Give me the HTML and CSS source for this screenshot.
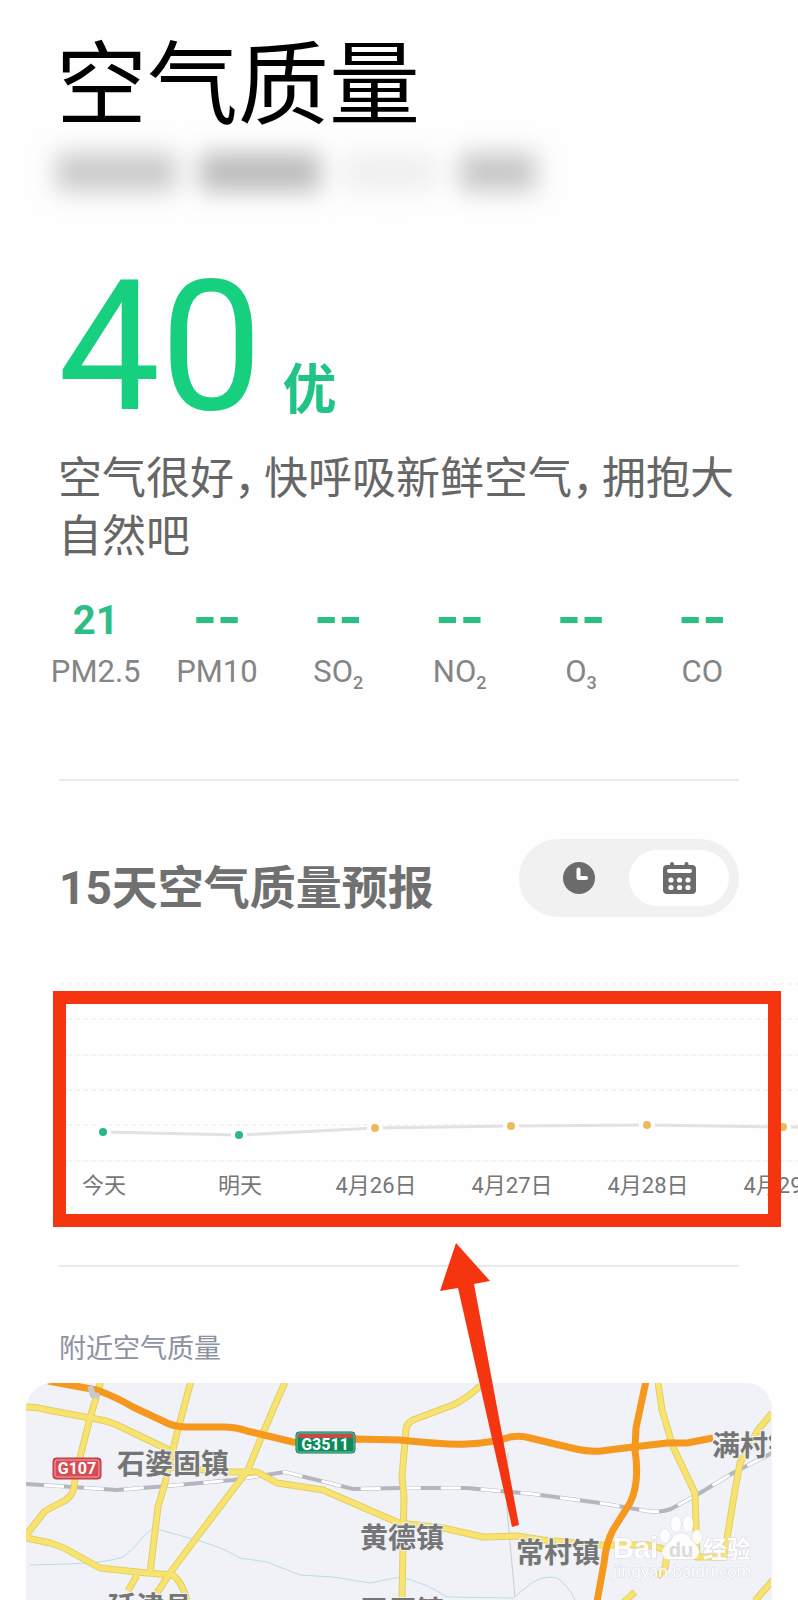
FILE: index.html
```html
<!DOCTYPE html>
<html lang="zh-CN">
<head>
    <meta charset="UTF-8">
    <meta name="viewport" content="width=device-width, initial-scale=1.0">
    <title>空气质量</title>
    <link rel="stylesheet" href="styles.css">
</head>
<body>
    <main class="page">
        <header class="header">
            <h1>空气质量</h1>
            <div class="location" aria-hidden="true">
                <span class="smudge wide"></span>
                <span class="smudge wide dark"></span>
                <span class="smudge faint"></span>
                <span class="smudge short"></span>
            </div>
        </header>

        <section class="summary">
            <div class="aqi">
                <span class="aqi-value">40</span>
                <span class="aqi-level">优</span>
            </div>
            <p class="advice">空气很好<span class="comma">，</span>快呼吸新鲜空气<span class="comma">，</span>拥抱大自然吧</p>
        </section>

        <dl class="pollutants">
            <div class="pollutant"><dd>21</dd><dt>PM2.5</dt></div>
            <div class="pollutant"><dd class="empty">--</dd><dt>PM10</dt></div>
            <div class="pollutant"><dd class="empty">--</dd><dt>SO<sub>2</sub></dt></div>
            <div class="pollutant"><dd class="empty">--</dd><dt>NO<sub>2</sub></dt></div>
            <div class="pollutant"><dd class="empty">--</dd><dt>O<sub>3</sub></dt></div>
            <div class="pollutant"><dd class="empty">--</dd><dt>CO</dt></div>
        </dl>

        <section class="forecast">
            <div class="forecast-head">
                <h2>15天空气质量预报</h2>
                <div class="toggle">
                    <button type="button" class="toggle-btn" aria-label="按小时">
                        <svg width="34" height="34" viewBox="0 0 34 34">
                            <circle cx="17" cy="17" r="16" fill="#6b6b6b"/>
                            <path d="M16.500 8.500V17H24" fill="none" stroke="#fff" stroke-width="4" stroke-linecap="round" stroke-linejoin="round"/>
                        </svg>
                    </button>
                    <button type="button" class="toggle-btn active" aria-label="按天">
                        <svg width="34" height="34" viewBox="0 0 34 34">
                            <rect x="1" y="4" width="33" height="29" rx="4" fill="#6b6b6b"/>
                            <path d="M10 3V7M24.500 3V7" stroke="#6b6b6b" stroke-width="4" stroke-linecap="round"/>
                            <path d="M7 10H28" stroke="#fff" stroke-width="4" stroke-linecap="round"/>
                            <g fill="#fff">
                                <circle cx="9" cy="19" r="2.600"/><circle cx="17.500" cy="19" r="2.600"/><circle cx="26" cy="19" r="2.600"/>
                                <circle cx="9" cy="26.500" r="2.600"/><circle cx="17.500" cy="26.500" r="2.600"/><circle cx="26" cy="26.500" r="2.600"/>
                            </g>
                        </svg>
                    </button>
                </div>
            </div>

            <div class="chart">
                <svg class="chart-plot" height="180" role="img" aria-label="15天空气质量折线图">
                    <g stroke="#f1f1ee" stroke-width="1.500" stroke-dasharray="5 3">
                        <path d="M0 1H1200M0 36H1200M0 72H1200M0 107H1200M0 142H1200M0 178H1200"/>
                    </g>
                    <path d="M44 149L180 152L316 145L452 143L588 142L724 144L860 144" fill="none" stroke="#e2e2e2" stroke-width="3"/>
                    <g stroke="#fff" stroke-width="8" paint-order="stroke">
                        <circle cx="44" cy="149" r="4" fill="#2db784"/>
                        <circle cx="180" cy="152" r="4" fill="#2db784"/>
                        <circle cx="316" cy="145" r="4" fill="#eeb95c"/>
                        <circle cx="452" cy="143" r="4" fill="#eeb95c"/>
                        <circle cx="588" cy="142" r="4" fill="#eeb95c"/>
                        <circle cx="724" cy="144" r="4" fill="#eeb95c"/>
                    </g>
                </svg>
                <ol class="days">
                    <li>今天</li>
                    <li>明天</li>
                    <li>4月26日</li>
                    <li>4月27日</li>
                    <li>4月28日</li>
                    <li>4月29日</li>
                </ol>
                <div class="highlight"></div>
            </div>
        </section>

        <section class="nearby">
            <svg class="arrow" width="90" height="290" viewBox="0 0 90 290">
                <path d="M23 1L57 39L41 42L86 283L79 285L25 46L7 49Z" fill="#f53510"/>
            </svg>
            <h3>附近空气质量</h3>
            <div class="map">
                <svg class="map-canvas" width="745" height="217" viewBox="0 0 745 217">
                    <g fill="none" stroke="#b9dcea" stroke-width="1">
                        <path d="M4 182L41 181Q80 180 97 174Q108 166 117 154L127 145L174 158Q200 166 214 175L241 179L274 192L307 194L344 200L374 194Q400 200 421 214L487 215L507 199Q520 192 531 195Q542 202 549 217"/>
                        <path d="M482 70L481 127L489 214" stroke="#c6cdd2"/>
                    </g>
                    <path d="M0 101L47 104L91 107L141 103L207 97L259 89L327 106L374 105L441 105L507 111L574 120L621 128Q634 130 645 126L674 110L707 90L746 70" fill="none" stroke="#b4b5bf" stroke-width="4"/>
                    <path d="M0 101L47 104L91 107L141 103L207 97L259 89L327 106L374 105L441 105L507 111L574 120L621 128Q634 130 645 126L674 110L707 90L746 70" fill="none" stroke="#fff" stroke-width="3" stroke-dasharray="20 20" stroke-dashoffset="-18"/>
                    <g class="road-edge">
                        <path d="M0 24Q10 24 17 26L64 35Q80 37 91 42L143 67"/>
                        <path d="M75 -2L64 35L49 94Q49 108 44 113Q40 118 34 120L19 128L1 151V155L24 160Q38 164 47 170L74 185L121 190L147 192Q156 199 161 217"/>
                        <path d="M165 -2L151 50L139 100L132 124L124 190"/>
                        <path d="M259 -1L237 50L222 87L171 154L144 190L131 210"/>
                        <path d="M143 84L204 89H231L251 100L297 107L327 120L373 140L417 145L457 154L491 153L517 157L574 162H621L671 174H698L709 107L714 80L732 47L746 30"/>
                        <path d="M454 3Q440 16 427 22L387 37Q380 41 380 47L376 94L378 114L376 217"/>
                        <path d="M632 -1L636 27L647 64L669 110L671 174"/>
                        <path d="M641 172L639 185L631 194M609 209L598 219M747 197L729 218M111 192L102 208"/>
                    </g>
                    <g class="road">
                        <path d="M0 24Q10 24 17 26L64 35Q80 37 91 42L143 67"/>
                        <path d="M75 -2L64 35L49 94Q49 108 44 113Q40 118 34 120L19 128L1 151V155L24 160Q38 164 47 170L74 185L121 190L147 192Q156 199 161 217"/>
                        <path d="M165 -2L151 50L139 100L132 124L124 190"/>
                        <path d="M259 -1L237 50L222 87L171 154L144 190L131 210"/>
                        <path d="M143 84L204 89H231L251 100L297 107L327 120L373 140L417 145L457 154L491 153L517 157L574 162H621L671 174H698L709 107L714 80L732 47L746 30"/>
                        <path d="M454 3Q440 16 427 22L387 37Q380 41 380 47L376 94L378 114L376 217"/>
                        <path d="M632 -1L636 27L647 64L669 110L671 174"/>
                        <path d="M641 172L639 185L631 194M609 209L598 219M747 197L729 218M111 192L102 208"/>
                    </g>
                    <g class="highway">
                        <path d="M22 -2L71 7Q90 14 107 24L141 40Q150 44 161 44L197 44Q210 44 221 48L267 59Q300 62 329 56L374 57Q420 62 441 61Q465 60 484 54Q495 52 504 55L550 66Q562 69 575 68L607 64L641 60H661L687 55"/>
                        <path d="M620 -2L610 45L609 67Q614 100 604 120L587 147Q580 160 578 180L571 219"/>
                    </g>
                    <path d="M64 3L67 12L73 13" fill="none" stroke="#c9c9cb" stroke-width="6"/>

                    <rect x="27" y="75" width="48" height="21" rx="3" fill="#d94a52" stroke="#b93d45"/>
                    <rect x="29" y="77" width="44" height="17" rx="2" fill="none" stroke="#e9a3a6"/>
                    <text class="shield" x="51" y="91">G107</text>

                    <rect x="270" y="49" width="59" height="21" rx="3" fill="#0b8a5c" stroke="#0b7a52"/>
                    <rect x="272" y="51" width="55" height="4" fill="#c74a48"/>
                    <rect x="271" y="50" width="57" height="19" rx="2" fill="none" stroke="#7cc0a4"/>
                    <text class="shield" x="299" y="67">G3511</text>

                    <g class="place">
                        <text x="91" y="91">石婆固镇</text>
                        <text x="334" y="165">黄德镇</text>
                        <text x="490" y="180">常村镇</text>
                        <text x="686" y="73">满村镇</text>
                        <text x="82" y="234">延津县</text>
                        <text x="334" y="238">王厂镇</text>
                    </g>
                </svg>
                <div class="watermark">
                    <svg width="150" height="76" viewBox="0 0 150 76">
                        <g class="mark">
                            <ellipse cx="63" cy="30" rx="5" ry="7"/>
                            <ellipse cx="74" cy="18" rx="5" ry="8"/>
                            <ellipse cx="86" cy="18" rx="5" ry="8"/>
                            <ellipse cx="95" cy="31" rx="5" ry="7"/>
                            <path d="M79 27Q86 27 89 34Q98 41 97 47Q95 55 87 53H71Q61 55 60 47Q60 41 68 36Q73 27 79 27Z"/>
                            <text class="mark-name" x="11" y="52">Bai</text>
                            <text class="mark-cn" x="101" y="52">经验</text>
                            <text class="mark-url" x="11" y="71">jingyan.baidu.com</text>
                        </g>
                        <text class="mark-du" x="79" y="51">du</text>
                    </svg>
                </div>
            </div>
        </section>
    </main>
</body>
</html>
```
FILE: styles.css
```css
* {
    box-sizing: border-box;
}
body {
    margin: 0;
    background-color: #fdfefd;
    font-family: Roboto, "Noto Sans CJK SC", sans-serif;
    color: #6b6b6b;
}
h1, h2, h3, p, dl, dd, ol {
    margin: 0;
    padding: 0;
}
.page {
    overflow: hidden;
}
.header {
    padding: 32px 56px 0;
}
h1 {
    font-size: 91px;
    font-weight: 400;
    line-height: 108px;
    color: #000;
}
.location {
    display: flex;
    gap: 24px;
    padding: 13px 0;
    filter: blur(12px);
}
.smudge {
    width: 76px;
    height: 38px;
    background-color: #cacaca;
}
.smudge.wide {
    width: 120px;
}
.smudge.dark {
    background-color: #bababa;
}
.smudge.faint {
    width: 92px;
    background-color: #efefef;
}
.smudge.short {
    background-color: #c6c6c6;
}

/* Current air quality */
.summary {
    padding: 56px 58px 0;
}
.aqi {
    display: flex;
    align-items: baseline;
    gap: 20px;
    height: 190px;
    line-height: 174px;
}
.aqi-value {
    font-size: 182px;
    color: #16d07f;
}
.aqi-level {
    font-size: 54px;
    font-weight: 700;
    line-height: 60px;
    color: #22c485;
}
.advice {
    font-size: 44px;
    line-height: 58px;
    color: #666;
}
.comma {
    padding-right: 8px;
    font-feature-settings: "halt";
}
.pollutants {
    display: grid;
    grid-template-columns: repeat(6, 1fr);
    padding: 28px 35px 0;
    text-align: center;
}
.pollutant dd {
    height: 54px;
    font-size: 40px;
    font-weight: 700;
    line-height: 54px;
    color: #2dbe86;
}
.pollutant dd.empty {
    font-family: Inter, sans-serif;
    font-size: 52px;
    line-height: 48px;
}
.pollutant dt {
    font-size: 31px;
    line-height: 48px;
    color: #858585;
}
.pollutant sub {
    font-size: 18px;
    font-weight: 500;
    line-height: 0;
}

/* Forecast */
.forecast {
    margin-top: 83px;
}
.forecast-head {
    display: flex;
    justify-content: space-between;
    align-items: flex-start;
    margin: 0 59px;
    padding-top: 58px;
    border-top: 2px solid #e6ebea;
}
h2 {
    font-size: 46px;
    font-weight: 700;
    line-height: 98px;
    color: #707070;
}
.toggle {
    display: flex;
    padding: 11px 10px;
    border-radius: 39px;
    background-color: #f1f1f1;
}
.toggle-btn {
    display: flex;
    align-items: center;
    justify-content: center;
    width: 100px;
    height: 56px;
    padding: 0;
    border: none;
    border-radius: 28px;
    background: none;
    cursor: pointer;
}
.toggle-btn.active {
    background-color: #fff;
}
.chart {
    position: relative;
    margin-top: 46px;
    padding: 0 0 22px 59px;
    overflow: hidden;
}
.chart-plot {
    display: block;
    width: 100%;
}
.days {
    display: flex;
    margin-left: -23px;
    padding-top: 3px;
    list-style: none;
    font-size: 22px;
    line-height: 40px;
    color: #777;
}
.days li {
    flex: 0 0 136px;
    text-align: center;
}
.highlight {
    position: absolute;
    top: 8px;
    right: 17px;
    left: 53px;
    height: 236px;
    border: 13px solid #f53510;
}

/* Nearby map */
.nearby {
    position: relative;
    margin: 37px 26px 0;
}
.nearby::before {
    content: "";
    display: block;
    height: 2px;
    margin: 0 33px;
    background-color: #e6ebea;
}
.arrow {
    position: absolute;
    top: -23px;
    left: 407px;
    z-index: 1;
}
h3 {
    padding: 62px 33px 14px;
    font-size: 27px;
    font-weight: 400;
    line-height: 40px;
    color: #8e92a2;
}
.map {
    position: relative;
    height: 217px;
    border-radius: 26px 26px 0 0;
    background-color: #f0f2f7;
    overflow: hidden;
}
.map-canvas {
    display: block;
}
.road-edge, .road, .highway {
    fill: none;
    stroke-linejoin: round;
}
.road-edge {
    stroke: #e2cf68;
    stroke-width: 7;
}
.road {
    stroke: #f8e36f;
    stroke-width: 5;
}
.highway {
    stroke: #f5981d;
    stroke-width: 7;
}
.place {
    font-size: 28px;
    font-weight: 700;
    fill: #757575;
    stroke: #f0f2f7;
    stroke-width: 2px;
    paint-order: stroke;
}
.shield {
    font-size: 16px;
    font-weight: 700;
    fill: #fff;
    text-anchor: middle;
}
.watermark {
    position: absolute;
    right: 20px;
    bottom: 18px;
}
.watermark svg {
    display: block;
}
.mark {
    fill: #fff;
    stroke: #d5d7dd;
    stroke-width: 1px;
    paint-order: stroke;
    opacity: 0.9;
}
.mark-name {
    font-family: "Liberation Sans", sans-serif;
    font-size: 29px;
    font-weight: 700;
}
.mark-cn {
    font-size: 24px;
    font-weight: 700;
}
.mark-url {
    font-family: "Noto Sans", sans-serif;
    font-size: 16px;
}
.mark-du {
    font-family: "Liberation Sans", sans-serif;
    font-size: 20px;
    font-weight: 700;
    fill: #d9dbe0;
    text-anchor: middle;
}
```
